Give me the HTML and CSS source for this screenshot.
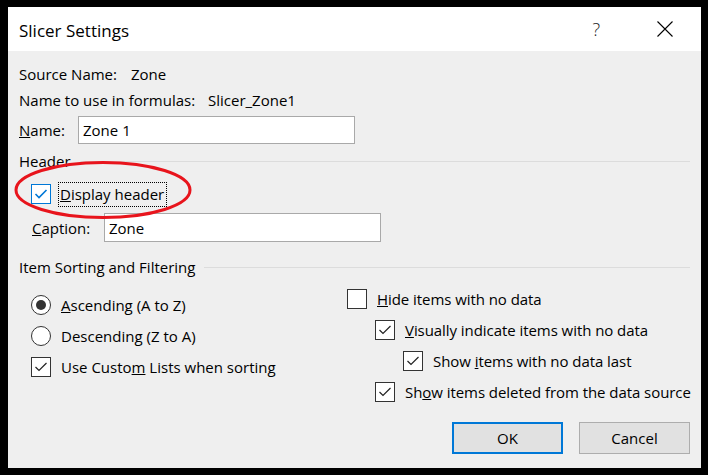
FILE: index.html
```html
<!DOCTYPE html>
<html>
<head>
    <meta charset="UTF-8" />
    <title>Slicer Settings</title>
    <link rel="stylesheet" href="styles.css">
</head>
<body>

<div class="dialog">
    <div class="titlebar">
        <div class="title">Slicer Settings</div>
        <div class="help">?</div>
        <div class="close">
            <svg width="16" height="16" viewBox="0 0 16 16"><path d="M0.5 0.5 L15.5 15.5 M15.5 0.5 L0.5 15.5" stroke="#000" stroke-width="1.1" fill="none"/></svg>
        </div>
    </div>

    <div class="content">
        <div class="info-row">
            <span class="lbl-source">Source Name:</span><span>Zone</span>
        </div>
        <div class="info-row">
            <span class="lbl-formula">Name to use in formulas:</span><span>Slicer_Zone1</span>
        </div>
        <div class="field-row">
            <span class="lbl-name"><u>N</u>ame:</span>
            <div class="textbox">Zone 1</div>
        </div>

        <div class="group">
            <span>Header</span><div class="rule"></div>
        </div>
        <div class="opt opt-display">
            <div class="check focus">
                <svg width="18" height="18" viewBox="0 0 18 18"><path d="M3.5 9 L7 12.5 L14.5 5" stroke="#0078d7" stroke-width="1.6" fill="none"/></svg>
            </div>
            <span class="focus-label"><u>D</u>isplay header</span>
        </div>
        <div class="field-row caption-row">
            <span class="lbl-caption"><u>C</u>aption:</span>
            <div class="textbox">Zone</div>
        </div>

        <div class="group group-sort">
            <span>Item Sorting and Filtering</span><div class="rule"></div>
        </div>

        <div class="columns">
            <div class="col-left">
                <div class="opt">
                    <div class="radio"><div class="dot"></div></div>
                    <span><u>A</u>scending (A to Z)</span>
                </div>
                <div class="opt">
                    <div class="radio"></div>
                    <span>Descendin<u>g</u> (Z to A)</span>
                </div>
                <div class="opt">
                    <div class="check">
                        <svg width="18" height="18" viewBox="0 0 18 18"><path d="M3.5 9 L7 12.5 L14.5 5" stroke="#222" stroke-width="1.2" fill="none"/></svg>
                    </div>
                    <span>Use Custo<u>m</u> Lists when sorting</span>
                </div>
            </div>
            <div class="col-right">
                <div class="opt">
                    <div class="check"></div>
                    <span><u>H</u>ide items with no data</span>
                </div>
                <div class="opt indent1">
                    <div class="check">
                        <svg width="18" height="18" viewBox="0 0 18 18"><path d="M3.5 9 L7 12.5 L14.5 5" stroke="#222" stroke-width="1.2" fill="none"/></svg>
                    </div>
                    <span><u>V</u>isually indicate items with no data</span>
                </div>
                <div class="opt indent2">
                    <div class="check">
                        <svg width="18" height="18" viewBox="0 0 18 18"><path d="M3.5 9 L7 12.5 L14.5 5" stroke="#222" stroke-width="1.2" fill="none"/></svg>
                    </div>
                    <span>Show <u>i</u>tems with no data last</span>
                </div>
                <div class="opt indent1">
                    <div class="check">
                        <svg width="18" height="18" viewBox="0 0 18 18"><path d="M3.5 9 L7 12.5 L14.5 5" stroke="#222" stroke-width="1.2" fill="none"/></svg>
                    </div>
                    <span>Sh<u>o</u>w items deleted from the data source</span>
                </div>
            </div>
        </div>

        <div class="buttons">
            <div class="btn btn-default">OK</div>
            <div class="btn">Cancel</div>
        </div>
    </div>

    <!-- red annotation drawn over the dialog -->
    <svg class="mark" width="184" height="62" viewBox="0 0 184 62">
        <ellipse cx="92" cy="31" rx="87" ry="27.5" stroke="#e8141c" stroke-width="3" fill="none"/>
    </svg>
</div>

</body>
</html>
```

FILE: styles.css
```css
body {
    margin: 0;
    background-color: #000;
    font-family: "Open Sans", "Noto Sans", sans-serif;
    font-size: 15px;
    color: #000;
}

.dialog {
    position: relative;
    margin: 7px 0 0 8px;
    width: 693px;
    height: 461px;
    background-color: #efefef;
    display: flex;
    flex-direction: column;
}

.titlebar {
    height: 44px;
    background-color: #fff;
    display: flex;
    align-items: center;
    padding-left: 11px;
}

.title {
    font-size: 17px;
    flex: 1;
    padding-top: 2px;
}

.help {
    font-size: 18px;
    font-weight: 300;
    color: #222;
    margin-right: 57px;
}

.close {
    width: 16px;
    height: 16px;
    margin-right: 28px;
}

.close svg {
    display: block;
}

.content {
    flex: 1;
    display: flex;
    flex-direction: column;
    padding: 10px 11px 14px 11px;
}

.info-row {
    height: 26px;
    display: flex;
    align-items: center;
}

.lbl-source {
    width: 112px;
}

.lbl-formula {
    width: 189px;
}

.field-row {
    margin-top: 3px;
    height: 28px;
    display: flex;
    align-items: center;
}

.lbl-name {
    width: 59px;
}

.textbox {
    width: 277px;
    height: 28px;
    box-sizing: border-box;
    border: 1px solid #a9a9a9;
    background-color: #fff;
    padding-left: 4px;
    display: flex;
    align-items: center;
}

.caption-row {
    margin-top: 6px;
    height: 29px;
    padding-left: 13px;
}

.caption-row .textbox {
    height: 29px;
}

.lbl-caption {
    width: 72px;
}

.group {
    margin-top: 6px;
    height: 22px;
    display: flex;
    align-items: center;
}

.group-sort {
    margin-top: 14px;
}

.rule {
    flex: 1;
    height: 1px;
    margin-left: 9px;
    background-color: #dcdcdc;
}

.opt {
    height: 31px;
    display: flex;
    align-items: center;
    white-space: nowrap;
}

.opt-display {
    height: 26px;
    margin-top: 9px;
    padding-left: 12px;
}

.check {
    width: 20px;
    height: 20px;
    box-sizing: border-box;
    border: 1px solid #333;
    background-color: #fff;
    margin-right: 10px;
    display: flex;
    align-items: center;
    justify-content: center;
    flex-shrink: 0;
}

.check.focus {
    border-color: #0078d7;
}

.focus-label {
    margin-left: -2px;
    padding: 1px 2px 2px 1px;
    outline: 1px dotted #000;
}

.radio {
    width: 20px;
    height: 20px;
    box-sizing: border-box;
    border: 1px solid #333;
    border-radius: 50%;
    background-color: #fff;
    margin-right: 10px;
    display: flex;
    align-items: center;
    justify-content: center;
    flex-shrink: 0;
}

.dot {
    width: 10px;
    height: 10px;
    border-radius: 50%;
    background-color: #333;
}

.columns {
    display: flex;
}

.col-left {
    width: 328px;
    flex-shrink: 0;
    padding: 11px 0 0 12px;
    box-sizing: border-box;
}

.col-right {
    padding-top: 5px;
    letter-spacing: -0.06px;
}

.indent1 {
    padding-left: 28px;
}

.indent2 {
    padding-left: 56px;
}

.buttons {
    margin-top: auto;
    display: flex;
    justify-content: flex-end;
    gap: 16px;
}

.btn {
    width: 111px;
    height: 32px;
    box-sizing: border-box;
    border: 1px solid #adadad;
    background-color: #e1e1e1;
    display: flex;
    align-items: center;
    justify-content: center;
}

.btn-default {
    border: 2px solid #0078d7;
}

.mark {
    position: absolute;
    left: 3px;
    top: 152px;
}
```
